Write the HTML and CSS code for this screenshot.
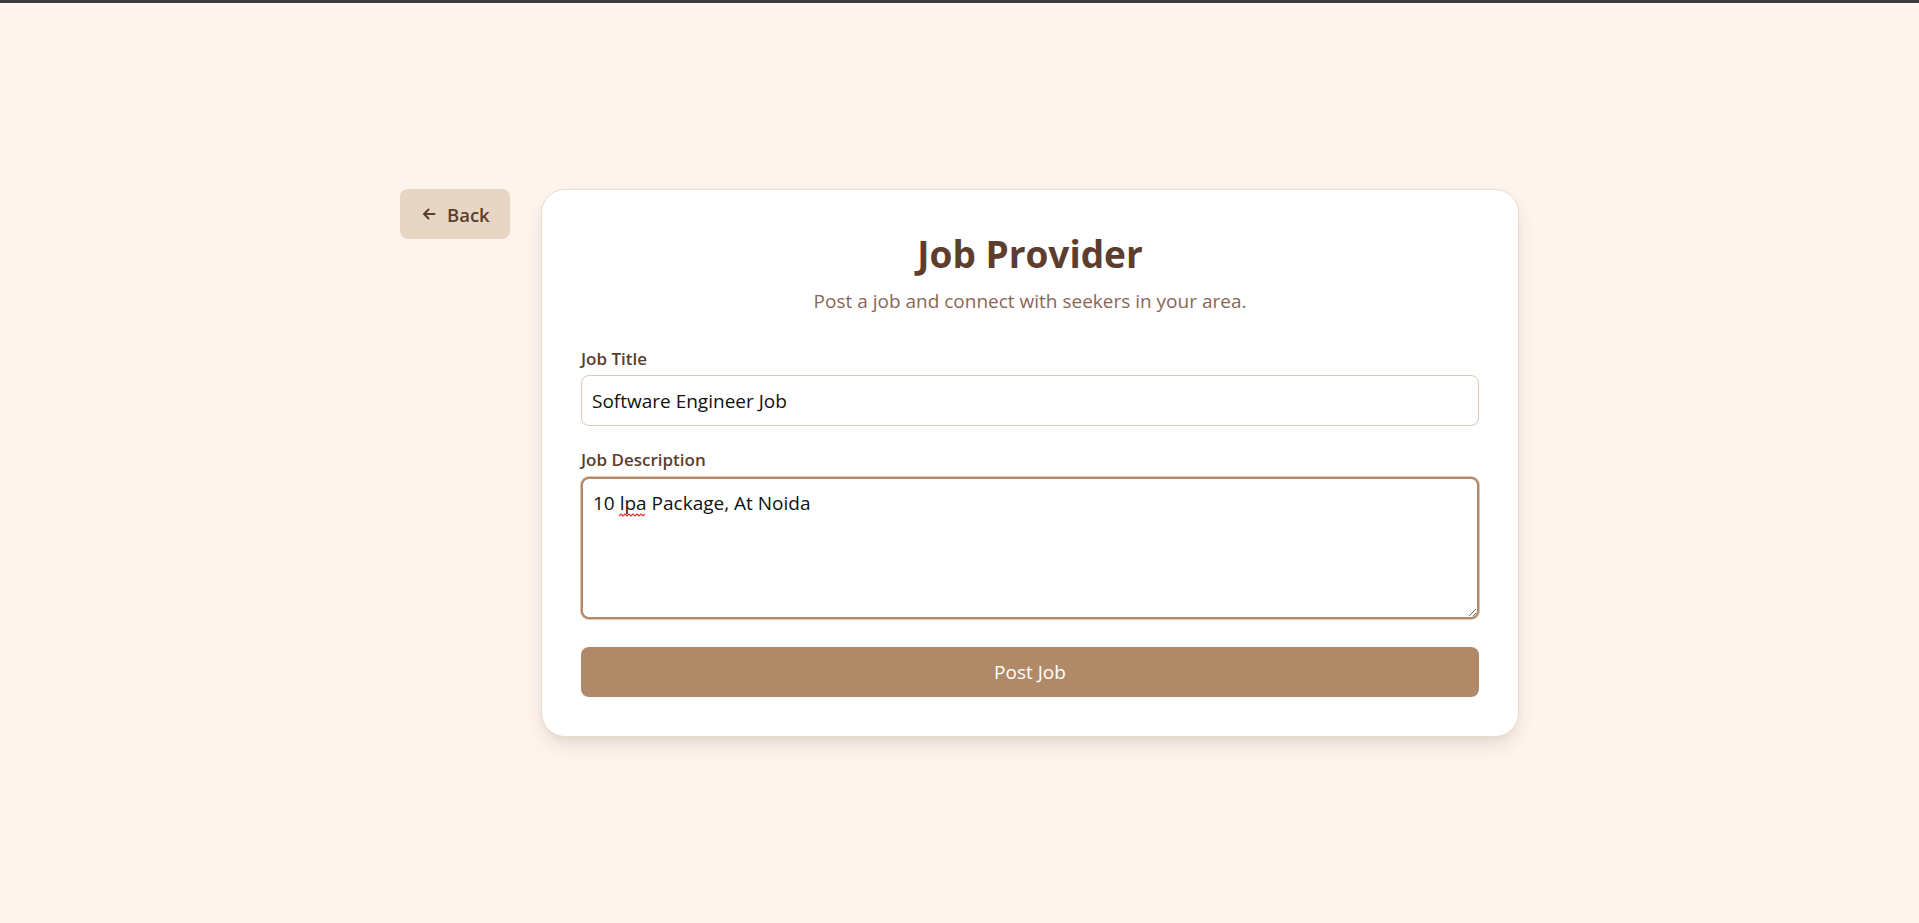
FILE: index.html
```html
<!DOCTYPE html>
<html lang="en">
<head>
<meta charset="utf-8">
<title>Job Provider</title>
<link rel="stylesheet" href="styles.css">
</head>
<body>
<div class="topbar"></div>
<main class="page">
  <div class="layout">
    <button class="back-btn" type="button">
      <svg class="back-icon" width="14" height="14" viewBox="0 0 14 14" aria-hidden="true">
        <path d="M12.5 7H2M6.5 2.5L2 7l4.5 4.5" fill="none" stroke="currentColor" stroke-width="2" stroke-linecap="round" stroke-linejoin="round"/>
      </svg>
      <span>Back</span>
    </button>
    <section class="card">
      <h1 class="title">Job Provider</h1>
      <p class="subtitle">Post a job and connect with seekers in your area.</p>
      <form class="form">
        <div class="field">
          <label class="label" for="title">Job Title</label>
          <input class="input" id="title" type="text" value="Software Engineer Job">
        </div>
        <div class="field field-desc">
          <label class="label" for="desc">Job Description</label>
          <div class="textarea-wrap">
            <textarea class="input textarea focused" id="desc" spellcheck="false">10 lpa Package, At Noida</textarea>
            <svg class="squiggle" width="26" height="4" viewBox="0 0 26 4" aria-hidden="true">
              <path d="M0 3 L2 1 L4 3 L6 1 L8 3 L10 1 L12 3 L14 1 L16 3 L18 1 L20 3 L22 1 L24 3 L26 1" fill="none" stroke="#e0302a" stroke-width="1.2"/>
            </svg>
          </div>
        </div>
        <button class="submit" type="button">Post Job</button>
      </form>
    </section>
  </div>
</main>
</body>
</html>
```

FILE: styles.css
```css
* { box-sizing: border-box; }
html, body { margin: 0; padding: 0; height: 100%; }
body {
  background: #fdf4ee;
  font-family: "Open Sans", "Noto Sans", sans-serif;
  display: flex;
  flex-direction: column;
}
.topbar {
  height: 3px;
  background: #3b3b3f;
  flex: none;
}
.page {
  flex: 1;
  display: flex;
  align-items: center;
  justify-content: center;
}
.layout {
  display: flex;
  align-items: flex-start;
  gap: 31px;
}
.back-btn {
  display: flex;
  align-items: center;
  gap: 11px;
  width: 110px;
  height: 50px;
  padding: 0 0 0 22px;
  border: none;
  border-radius: 8px;
  background: #e7d6c4;
  color: #5c3d2e;
  font-family: inherit;
  font-size: 18.5px;
  font-weight: 600;
  cursor: pointer;
}
.back-icon { flex: none; }
.card {
  width: 978px;
  background: #fff;
  border: 1px solid #ecdccb;
  border-radius: 24px;
  padding: 39px;
  box-shadow: 0 10px 20px -4px rgba(80, 50, 30, 0.14), 0 4px 8px -4px rgba(80, 50, 30, 0.08);
}
.title {
  margin: 0;
  text-align: center;
  font-size: 37px;
  line-height: 50px;
  font-weight: 700;
  color: #5c3d2e;
}
.subtitle {
  margin: 8px 0 0;
  text-align: center;
  font-size: 19px;
  line-height: 28px;
  color: #8b6656;
}
.form {
  margin-top: 32px;
  display: flex;
  flex-direction: column;
}
.field {
  display: flex;
  flex-direction: column;
  gap: 4px;
  margin-bottom: 22px;
}
.field-desc { margin-bottom: 28px; }
.label {
  font-size: 17px;
  line-height: 24px;
  font-weight: 600;
  color: #5c3d2e;
}
.input {
  display: block;
  width: 100%;
  height: 51px;
  padding: 0 10px;
  border: 1px solid #dbc8b5;
  border-radius: 8px;
  background: #fff;
  color: #111;
  font-family: inherit;
  font-size: 19px;
  outline: none;
}
.textarea-wrap {
  position: relative;
  margin-top: 1px;
}
.textarea {
  height: 142px;
  padding: 10px 10px;
  line-height: 28px;
  resize: vertical;
}
.textarea.focused {
  border: 2px solid #b08968;
  box-shadow: 0 0 0 1px #dcc6b0;
}
.squiggle {
  position: absolute;
  left: 38px;
  top: 36px;
}
.submit {
  height: 50px;
  border: none;
  border-radius: 8px;
  background: #b08968;
  color: #fff;
  font-family: inherit;
  font-size: 19px;
  cursor: pointer;
}
```
